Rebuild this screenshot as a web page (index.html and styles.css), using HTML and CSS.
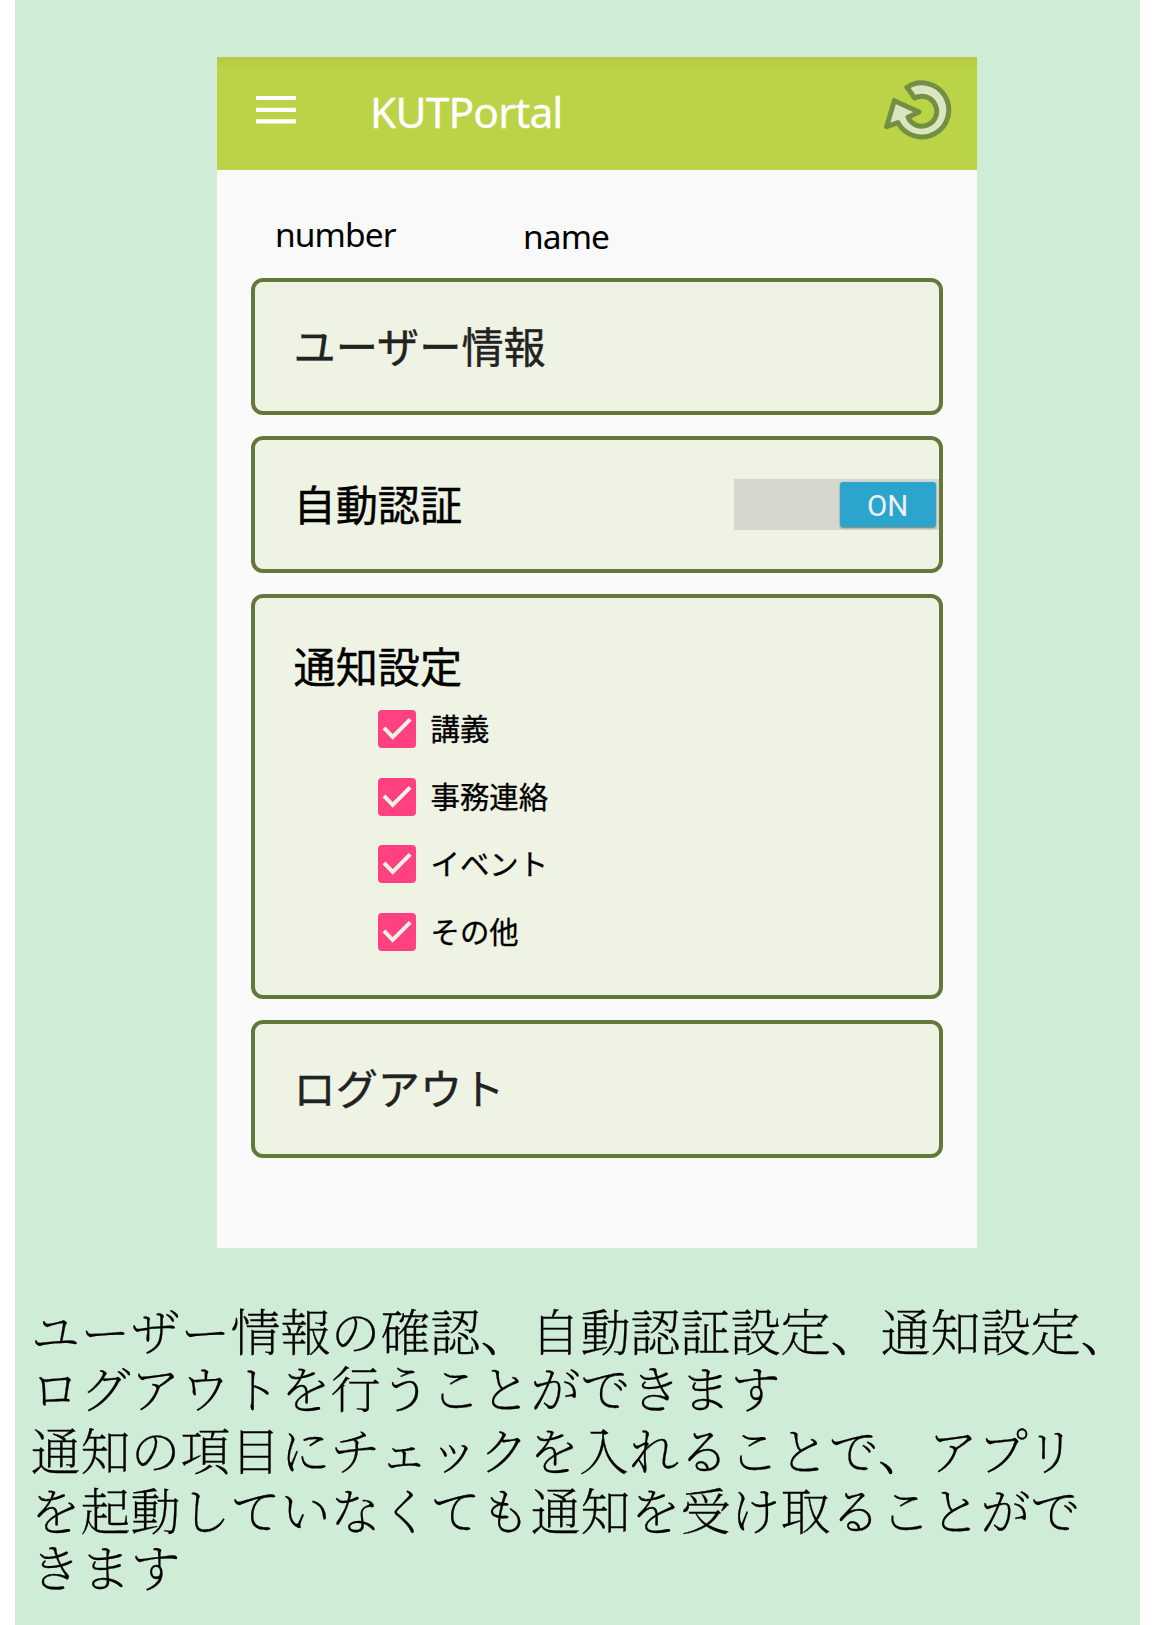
FILE: index.html
```html
<!DOCTYPE html>
<html lang="ja">
<head>
<meta charset="utf-8">
<title>KUTPortal</title>
<link rel="stylesheet" href="styles.css">
</head>
<body>
<div class="slide">
  <div class="phone">
    <header class="bar">
      <svg class="menu" width="40" height="28" viewBox="0 0 40 28"><path d="M0 2h40M0 13.8h40M0 25.4h40" stroke="#fff" stroke-width="4.2"/></svg>
      <h1 class="title">KUTPortal</h1>
      <svg class="reload" width="72" height="66" viewBox="36 54 216 198"><path d="M111 82A81 81 0 1 1 84 188L50 200L73 122L147 156L114 172A45 45 0 1 0 134 114Z" fill="#dae6c0" stroke="#728f43" stroke-width="15" stroke-linejoin="round"/></svg>
    </header>
    <div class="account">
      <span class="number">number</span>
      <span class="name">name</span>
    </div>
    <main class="cards">
      <section class="card soft"><h2>ユーザー情報</h2></section>
      <section class="card auth">
        <h2>自動認証</h2>
        <div class="switch"><span class="thumb">ON</span></div>
      </section>
      <section class="card notice">
        <h2>通知設定</h2>
        <ul class="options">
          <li><svg class="check" viewBox="0 0 38 38"><path d="M6 17.8L14.7 26.8L32.2 9.3"/></svg><span>講義</span></li>
          <li><svg class="check" viewBox="0 0 38 38"><path d="M6 17.8L14.7 26.8L32.2 9.3"/></svg><span>事務連絡</span></li>
          <li><svg class="check" viewBox="0 0 38 38"><path d="M6 17.8L14.7 26.8L32.2 9.3"/></svg><span>イベント</span></li>
          <li><svg class="check" viewBox="0 0 38 38"><path d="M6 17.8L14.7 26.8L32.2 9.3"/></svg><span>その他</span></li>
        </ul>
      </section>
      <section class="card soft"><h2>ログアウト</h2></section>
    </main>
  </div>
  <div class="caption">
    <p>ユーザー情報の確認、自動認証設定、通知設定、<br>ログアウトを行うことができます</p>
    <p class="second">通知の項目にチェックを入れることで、アプリ</p>
    <p>を起動していなくても通知を受け取ることがで<br>きます</p>
  </div>
</div>
</body>
</html>
```
FILE: styles.css
```css
* { box-sizing: border-box; }
body { margin: 0; background: #fff; font-family: "Noto Sans CJK JP", sans-serif; color: #000; }
h1, h2, p, ul { margin: 0; padding: 0; font-weight: 400; }
.slide { width: 1125px; height: 1625px; margin-left: 15px; padding-top: 57px; background: #cfecd6; overflow: hidden; }
.phone { width: 760px; height: 1191px; margin-left: 202px; background: #fafafa; }
.bar { display: flex; height: 113px; padding-left: 39px; background: linear-gradient(#b5cb45, #bbd447 17px); }
.menu { margin-top: 39px; }
.title { width: 509px; margin: 25px 0 0 74px; font: 42.5px/60px "Noto Sans", sans-serif; letter-spacing: -.85px; color: #fff; -webkit-text-stroke: .3px #fff; }
.reload { margin-top: 21px; margin-left: 2.5px; flex: none; }
.account { display: flex; align-items: flex-start; gap: 52px; height: 107.5px; padding: 43px 0 0 34px; font: 33.5px/42px "Noto Sans", sans-serif; }
.number { width: 170px; height: 40px; padding-left: 24px; background: #f9f9f9; letter-spacing: -.9px; }
.name { width: 189px; height: 45px; padding: 2px 0 0 50px; background: #f9f9f9; letter-spacing: -.9px; }
.cards { display: flex; flex-direction: column; gap: 21px; padding: 0 34px; }
.card { display: flex; align-items: center; height: 137.4px; padding-left: 38.5px; background: #eff3e4; border: 4px solid #64783a; border-radius: 12px; }
.card h2 { font-size: 42.2px; line-height: 60px; padding-bottom: 3px; -webkit-text-stroke: .4px currentColor; }
.soft h2 { color: #222; }
.auth { justify-content: space-between; }
.switch { display: flex; justify-content: flex-end; width: 205px; height: 51px; padding: 3px 3px 0 0; background: #d5d8cf; }
.thumb { width: 96.5px; height: 45px; background: #2ca5ce; border-radius: 3px; box-shadow: 0 1px 2px rgba(0,0,0,.45); color: #eef2f2; text-align: center; font: 29.5px/48px Roboto, sans-serif; }
.notice { display: block; height: 405px; padding-top: 37px; }
.notice h2 { padding: 0; }
.options { list-style: none; padding: 15px 0 0 84px; }
.options li { display: flex; align-items: flex-start; gap: 15px; height: 67.6px; font-size: 29.4px; line-height: 34px; -webkit-text-stroke: .3px currentColor; }
.check { width: 38px; height: 38px; flex: none; background: #ff4081; border-radius: 4px; fill: none; stroke: #eff3e4; stroke-width: 4; }
.caption { padding: 53px 0 0 15.5px; font: 200 50px/57px "Noto Serif CJK JP", "Noto Sans CJK JP", serif; white-space: nowrap; -webkit-text-stroke: .3px #000; }
.caption p { font-weight: 200; }
.caption .second { margin: 5px 0 3px; }
```
